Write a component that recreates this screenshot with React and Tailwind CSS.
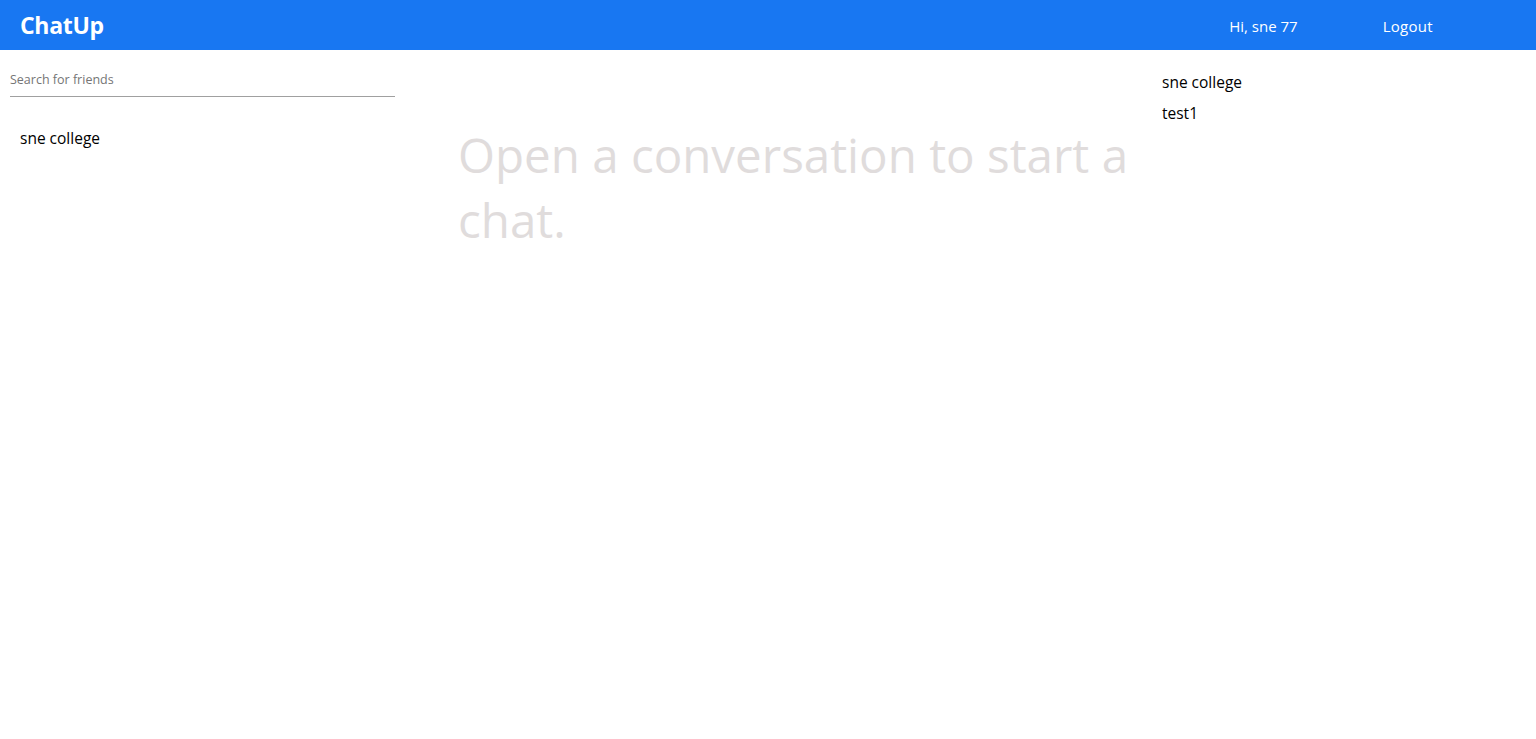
import React from 'react';

export default function App() {
    const conversations = ['sne college'];
    const online = ['sne college', 'test1'];
    return (<div className="min-h-screen bg-white">
      {/* Topbar */}
      <div className="h-[50px] w-full bg-[#1877f2] flex items-center text-white font-['Open_Sans',sans-serif]">
        <div className="flex-[3] pl-5">
          <span className="text-[23px] font-bold tracking-[-0.3px]">ChatUp</span>
        </div>
        <div className="flex-[5]" />
        <div className="flex items-center text-[15px] pr-[103px] pt-[2px]">
          <span className="mr-[85px]">Hi, sne 77</span>
          <span className="tracking-[0.3px]">Logout</span>
        </div>
      </div>

      {/* Messenger */}
      <div className="flex h-[calc(100vh-50px)] font-['Open_Sans',sans-serif]">
        <div className="flex-[3.5]">
          <div className="p-2.5 h-full">
            <input placeholder="Search for friends" className="w-[90%] h-[37px] pt-[2px] border-0 border-b border-[#a0a0a0] outline-none text-[12.5px] placeholder:text-[#757575]"/>
            {conversations.map((c) => (<div key={c} className="flex items-center p-2.5 mt-5 text-[15.5px] text-black">
                {c}
              </div>))}
          </div>
        </div>

        <div className="flex-[5.5]">
          <div className="p-2.5 h-full">
            <div className="mt-[62px] text-[47.5px] leading-[65px] text-[rgb(224,220,220)] font-normal cursor-default">
              Open a conversation to start a chat.
            </div>
          </div>
        </div>

        <div className="flex-[3]">
          <div className="px-2.5 pt-[12px] h-full">
            {online.map((f) => (<div key={f} className="mt-2.5 text-[15.5px] leading-[21px] text-black">
                {f}
              </div>))}
          </div>
        </div>
      </div>
    </div>);
}
